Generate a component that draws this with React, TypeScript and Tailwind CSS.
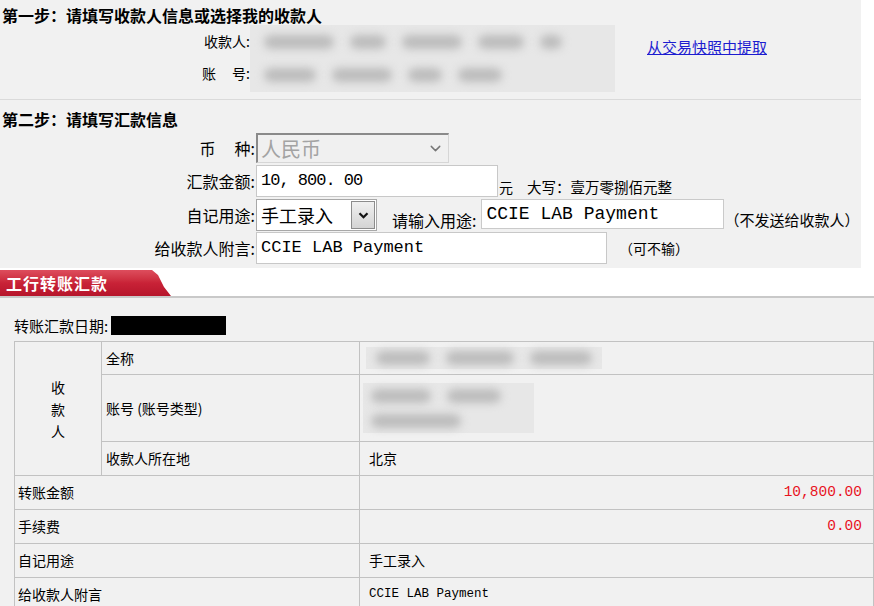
import { ChevronDown } from "lucide-react";

const mono = "font-['Liberation_Mono','Noto_Sans_CJK_SC',monospace]";
const cell = "border border-[#c2c2c2] p-0 align-middle";

function Blurred({ className, rows }: { className: string; rows: number[][] }) {
  return (
    <div className={`flex flex-col justify-around bg-[#e7e7e7] px-[14px] ${className}`}>
      {rows.map((r, i) => (
        <div key={i} className="flex gap-[16px]">
          {r.map((w, j) => (
            <span key={j} style={{ width: w }} className="h-[14px] rounded-full bg-[#bcbcbc] blur-[4px]" />
          ))}
        </div>
      ))}
    </div>
  );
}

function Label({ children }: { children: React.ReactNode }) {
  return <div className="w-[256px] shrink-0 pr-[1px] text-right text-[16px] leading-[20px]">{children}</div>;
}

export default function App() {
  return (
    <div className="h-[606px] w-[874px] overflow-hidden bg-white font-['Noto_Sans_CJK_SC',sans-serif] text-black">
      <div className="h-[268px] w-[861px] bg-[#f1f1f1]">
        {/* step 1 */}
        <div className="h-[100px] border-b border-[#dadada] pt-[5px]">
          <h2 className="pl-[2px] text-[16px] font-bold leading-[20px]">第一步：请填写收款人信息或选择我的收款人</h2>
          <div className="flex">
            <div className="w-[250px] text-right text-[14px]">
              <div className="h-[32px] leading-[32px]">收款人:</div>
              <div className="h-[32px] leading-[32px]">
                账<span className="inline-block w-[16px]" />号:
              </div>
            </div>
            <Blurred
              className="h-[67px] w-[365px]"
              rows={[
                [70, 36, 60, 46, 22],
                [52, 60, 34, 44],
              ]}
            />
            <a href="#" className="ml-[32px] mt-[12px] text-[15px] leading-[20px] text-[#1c1cd0] underline">
              从交易快照中提取
            </a>
          </div>
        </div>

        {/* step 2 */}
        <div className="pt-[9px]">
          <h2 className="pl-[2px] text-[16px] font-bold leading-[20px]">第二步：请填写汇款信息</h2>
          <div className="mt-[4px] flex flex-col">
            <div className="flex h-[30px] items-center">
              <Label>
                币<span className="inline-block w-[19px]" />种:
              </Label>
              <div className="flex h-[30px] w-[193px] items-center justify-between border-t-2 border-l-2 border-r border-b border-t-[#8a8a8a] border-l-[#8a8a8a] border-r-[#d6d6d6] border-b-[#d6d6d6] bg-[#f0f0f0] pl-[3px] pr-[4px]">
                <span className="text-[20px] leading-[24px] text-[#a3a3a3]">人民币</span>
                <ChevronDown size={17} strokeWidth={2} className="text-[#777]" />
              </div>
            </div>

            <div className="mt-[2px] flex h-[32px] items-end">
              <div className="self-center">
                <Label>汇款金额:</Label>
              </div>
              <div className={`flex h-[32px] w-[242px] items-center border border-[#c8c8c8] bg-white pl-[4px] text-[17px] tracking-[-1px] ${mono}`}>
                10, 800. 00
              </div>
              <span className="ml-[1px] text-[14px] leading-[20px]">元</span>
              <span className="ml-[14px] text-[14.5px] leading-[20px]">大写：壹万零捌佰元整</span>
            </div>

            <div className="mt-[2px] flex h-[32px] items-end">
              <div className="self-center">
                <Label>自记用途:</Label>
              </div>
              <div className="flex h-[32px] w-[121px] items-center justify-between border border-[#a8a8a8] bg-white pl-[4px] pr-[1px]">
                <span className="text-[18px] leading-[24px]">手工录入</span>
                <span className="flex h-[28px] w-[24px] items-center justify-center border border-[#8c8c8c] bg-linear-to-b from-[#f0f0f0] to-[#d4d4d4]">
                  <svg width="11" height="7" viewBox="0 0 11 7">
                    <polyline points="1.5,1.2 5.5,5.2 9.5,1.2" fill="none" stroke="#111" strokeWidth="2.2" />
                  </svg>
                </span>
              </div>
              <span className="ml-[15px] pb-[1px] text-[16px] leading-[20px]">请输入用途:</span>
              <div className={`mb-[2px] ml-[5px] flex h-[30px] w-[243px] items-center border border-[#cacaca] bg-white pl-[4px] text-[18px] ${mono}`}>
                CCIE LAB Payment
              </div>
              <span className="pb-[1px] text-[15px] leading-[20px]">（不发送给收款人）</span>
            </div>

            <div className="mt-[1px] flex h-[32px] items-center">
              <Label>给收款人附言:</Label>
              <div className={`flex h-[32px] w-[351px] items-center border border-[#c8c8c8] bg-white pl-[4px] text-[17px] ${mono}`}>
                CCIE LAB Payment
              </div>
              <span className="ml-[12px] text-[14px] leading-[20px]">（可不输）</span>
            </div>
          </div>
        </div>
      </div>

      {/* tab header */}
      <div className="mt-[2px] flex h-[28px] border-b-2 border-[#c9c9c9]">
        <div className="flex h-[26px] w-[171px] items-center bg-linear-to-b from-[#dd4d5d] via-[#c92237] to-[#b6152b] pl-[6px] text-[16px] font-bold tracking-[1px] text-white [clip-path:polygon(0_0,152px_0,158px_5px,164px_17px,171px_26px,0_26px)]">
          工行转账汇款
        </div>
      </div>

      {/* detail */}
      <div className="h-[308px] bg-[#f1f1f1] pl-[14px] pt-[18px]">
        <div className="flex h-[19px] items-center">
          <span className="text-[15px] leading-[19px]">转账汇款日期:</span>
          <span className="ml-[3px] h-[19px] w-[115px] bg-black" />
        </div>
        <table className="mt-[6px] w-[860px] table-fixed border-collapse text-[14px]">
          <colgroup>
            <col className="w-[87px]" />
            <col className="w-[258px]" />
            <col />
          </colgroup>
          <tbody>
            <tr className="h-[33px]">
              <td rowSpan={3} className={`${cell} text-center leading-[22px]`}>
                <div>收</div>
                <div>款</div>
                <div>人</div>
              </td>
              <td className={`${cell} pl-[4px]`}>全称</td>
              <td className={`${cell} pl-[6px]`}>
                <Blurred className="h-[22px] w-[236px] !px-[10px]" rows={[[56, 70, 64]]} />
              </td>
            </tr>
            <tr className="h-[67px]">
              <td className={`${cell} pl-[4px]`}>账号 (账号类型)</td>
              <td className={`${cell} pl-[3px]`}>
                <Blurred className="h-[50px] w-[171px] !px-[8px]" rows={[[60, 54], [90]]} />
              </td>
            </tr>
            <tr className="h-[34px]">
              <td className={`${cell} pl-[4px]`}>收款人所在地</td>
              <td className={`${cell} pl-[9px]`}>北京</td>
            </tr>
            <tr className="h-[34px]">
              <td colSpan={2} className={`${cell} pl-[3px]`}>转账金额</td>
              <td className={`${cell} pr-[11px] text-right text-[14.5px] text-[#e8141e] ${mono}`}>10,800.00</td>
            </tr>
            <tr className="h-[34px]">
              <td colSpan={2} className={`${cell} pl-[3px]`}>手续费</td>
              <td className={`${cell} pr-[11px] text-right text-[14.5px] text-[#e8141e] ${mono}`}>0.00</td>
            </tr>
            <tr className="h-[34px]">
              <td colSpan={2} className={`${cell} pl-[3px]`}>自记用途</td>
              <td className={`${cell} pl-[9px]`}>手工录入</td>
            </tr>
            <tr className="h-[34px]">
              <td colSpan={2} className={`${cell} pl-[3px]`}>给收款人附言</td>
              <td className={`${cell} pl-[9px] text-[12.5px] ${mono}`}>CCIE LAB Payment</td>
            </tr>
          </tbody>
        </table>
      </div>
    </div>
  );
}
